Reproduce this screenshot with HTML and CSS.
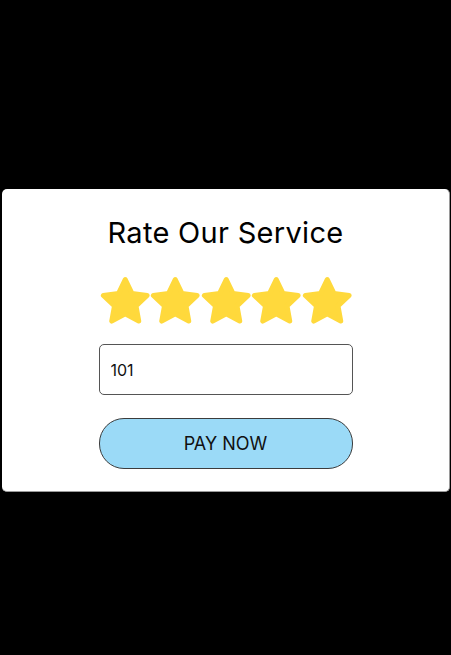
FILE: index.html
```html
<!DOCTYPE html>
<html lang="en">
<head>
<meta charset="utf-8">
<title>Rate Our Service</title>
<link rel="stylesheet" href="styles.css">
</head>
<body>
<main class="page">
  <section class="card">
    <h1 class="title">Rate Our Service</h1>
    <div class="stars">
      <svg class="star" viewBox="0 0 50 48"><polygon points="25,3.5 31.64,17.36 46.87,19.39 35.75,29.99 38.52,45.11 25,37.8 11.48,45.11 14.25,29.99 3.13,19.39 18.36,17.36"/></svg>
      <svg class="star" viewBox="0 0 50 48"><polygon points="25,3.5 31.64,17.36 46.87,19.39 35.75,29.99 38.52,45.11 25,37.8 11.48,45.11 14.25,29.99 3.13,19.39 18.36,17.36"/></svg>
      <svg class="star" viewBox="0 0 50 48"><polygon points="25,3.5 31.64,17.36 46.87,19.39 35.75,29.99 38.52,45.11 25,37.8 11.48,45.11 14.25,29.99 3.13,19.39 18.36,17.36"/></svg>
      <svg class="star" viewBox="0 0 50 48"><polygon points="25,3.5 31.64,17.36 46.87,19.39 35.75,29.99 38.52,45.11 25,37.8 11.48,45.11 14.25,29.99 3.13,19.39 18.36,17.36"/></svg>
      <svg class="star" viewBox="0 0 50 48"><polygon points="25,3.5 31.64,17.36 46.87,19.39 35.75,29.99 38.52,45.11 25,37.8 11.48,45.11 14.25,29.99 3.13,19.39 18.36,17.36"/></svg>
    </div>
    <input class="amount" type="text" value="101">
    <button class="pay" type="button">PAY NOW</button>
  </section>
</main>
</body>
</html>
```

FILE: styles.css
```css
html, body {
  margin: 0;
  padding: 0;
  background: #000;
}
.page {
  padding: 189px 1px 0 2px;
  font-family: "Inter", "Noto Sans", sans-serif;
}
.card {
  background: #fff;
  border-radius: 5px;
  border-right: 1px solid #9a9a9a;
  border-bottom: 1px solid #9a9a9a;
  height: 303px;
  box-sizing: border-box;
  display: flex;
  flex-direction: column;
  align-items: center;
  padding-top: 27px;
}
.title {
  margin: 0;
  font-size: 29px;
  font-weight: 400;
  line-height: 34px;
  color: #000;
  letter-spacing: 0.3px;
}
.stars {
  display: flex;
  margin-top: 26px;
  margin-left: 1px;
}
.star {
  width: 50.5px;
  height: 48px;
  display: block;
}
.star polygon {
  fill: #ffd93c;
  stroke: #ffd93c;
  stroke-width: 5;
  stroke-linejoin: round;
}
.amount {
  margin-top: 20px;
  width: 254px;
  height: 51px;
  box-sizing: border-box;
  border: 1px solid #555;
  border-radius: 5px;
  padding: 0 11px;
  font-family: "Inter", "Noto Sans", sans-serif;
  font-size: 16px;
  color: #111;
  outline: none;
}
.pay {
  margin-top: 23px;
  width: 254px;
  height: 51px;
  box-sizing: border-box;
  border: 1px solid #3c3c3c;
  border-radius: 25px;
  background: #9bdaf7;
  font-family: "Inter", "Noto Sans", sans-serif;
  font-size: 18px;
  color: #111;
  padding: 0;
}
```
